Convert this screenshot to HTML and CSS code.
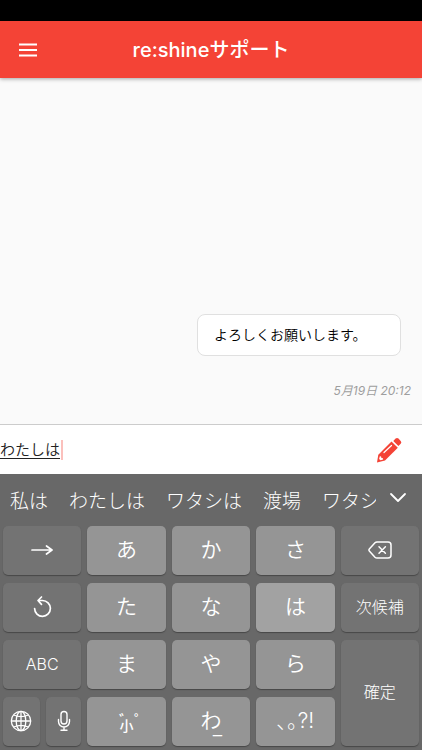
FILE: index.html
```html
<!DOCTYPE html>
<html lang="ja">
<head>
<meta charset="utf-8">
<meta name="viewport" content="width=device-width, initial-scale=1">
<title>re:shineサポート</title>
<link rel="stylesheet" href="styles.css">
</head>
<body>
<div class="app">
  <div class="status-bar"></div>
  <header class="app-bar">
    <button class="icon-button" type="button" aria-label="メニュー">
      <svg width="20" height="14" viewBox="0 0 20 14"><path d="M1 1.500h18M1 7h18M1 12.500h18" stroke="#fff" stroke-width="1.800" fill="none"/></svg>
    </button>
    <h1 class="title">re:shineサポート</h1>
  </header>
  <main class="chat">
    <p class="bubble">よろしくお願いします。</p>
    <time class="time">5月19日 20:12</time>
  </main>
  <form class="composer">
    <input class="composer-input" type="text" value="わたしは" aria-label="メッセージ">
    <span class="caret"></span>
    <button class="icon-button send" type="button" aria-label="送信">
      <svg width="26" height="26" viewBox="0 0 26 26">
        <path fill="#f44336" d="M17.300 3.900 19.600 1.600Q21 .2 22.500 1.600L24.700 3.900Q26 5.300 24.700 6.700L22.400 9Z"/>
        <path fill="#f44336" d="M15.500 4.500 21.800 10.800 9 23.600 1 25.500 2.300 17.700Z"/>
        <path d="M8 15.500 15.500 8.500" stroke="#fff" stroke-width="1.200" stroke-linecap="round"/>
        <path fill="#fff" d="M3.800 19.300 5.100 19.400 5.400 21.100 7 21.300 7.100 22.500 4.500 23.200 3.100 22Z"/>
      </svg>
    </button>
  </form>
  <section class="keyboard" aria-label="キーボード">
    <div class="candidates">
      <div class="candidate-list">
        <button type="button">私は</button>
        <button type="button">わたしは</button>
        <button type="button">ワタシは</button>
        <button type="button">渡場</button>
        <button type="button">ワタシ</button>
      </div>
      <button class="expand" type="button" aria-label="候補を開く">
        <svg width="18" height="12" viewBox="0 0 18 12"><path d="M2 2l7 7 7-7" fill="none" stroke="#fff" stroke-width="1.800" stroke-linecap="round" stroke-linejoin="round"/></svg>
      </button>
    </div>
    <div class="keys">
      <button class="key dark" type="button" aria-label="次の文字">
        <svg width="22" height="12" viewBox="0 0 22 12"><path d="M1 6h20M15.500 2 21 6l-5.500 4" fill="none" stroke="#fff" stroke-width="1.700" stroke-linecap="round" stroke-linejoin="round"/></svg>
      </button>
      <button class="key" type="button">あ</button>
      <button class="key" type="button">か</button>
      <button class="key" type="button">さ</button>
      <button class="key dark" type="button" aria-label="削除">
        <svg width="26" height="20" viewBox="0 0 26 20"><g fill="none" stroke="#fff" stroke-width="1.500" stroke-linecap="round" stroke-linejoin="round"><path d="M10 2h11q3 0 3 3v10q0 3-3 3H10q-1.200 0-2-.8L2.300 11q-.9-1 0-2L8 2.800Q8.800 2 10 2Z"/><path d="M12 6.800l6.400 6.400M18.400 6.800 12 13.200"/></g></svg>
      </button>

      <button class="key dark" type="button" aria-label="戻す">
        <svg width="20" height="24" viewBox="0 0 20 24"><path d="M2.600 13.500a7.900 7.900 0 1 0 7.900-8H6.200M9.500 2 6 5.500 9.500 9.400" fill="none" stroke="#fff" stroke-width="1.700" stroke-linecap="round" stroke-linejoin="round"/></svg>
      </button>
      <button class="key" type="button">た</button>
      <button class="key" type="button">な</button>
      <button class="key active" type="button">は</button>
      <button class="key dark label" type="button">次候補</button>

      <button class="key dark label" type="button">ABC</button>
      <button class="key" type="button">ま</button>
      <button class="key" type="button">や</button>
      <button class="key" type="button">ら</button>
      <button class="key dark label confirm" type="button">確定</button>

      <div class="split">
        <button class="key dark" type="button" aria-label="言語切替">
          <svg width="22" height="22" viewBox="0 0 22 22"><g fill="none" stroke="#fff" stroke-width="1.300"><circle cx="11" cy="11" r="9.700"/><ellipse cx="11" cy="11" rx="4.800" ry="9.700"/><path d="M11 1.300v19.400M1.300 11h19.400M3.700 5q7.300 3.400 14.600 0M3.700 17q7.300-3.400 14.600 0"/></g></svg>
        </button>
        <button class="key dark" type="button" aria-label="音声入力">
          <svg width="14" height="22" viewBox="0 0 14 22"><g fill="none" stroke="#fff" stroke-width="1.400" stroke-linecap="round"><rect x="4" y="1.500" width="6" height="12.500" rx="3"/><path d="M1.500 9.500v2a5.500 5.500 0 0 0 11 0v-2M7 17v3.300M4 20.300h6"/></g></svg>
        </button>
      </div>
      <button class="key marks" type="button"><span class="voicing">゛゜</span><span class="small">小</span></button>
      <button class="key wa" type="button">わ<span class="low-line">_</span></button>
      <button class="key punctuation" type="button">､｡?!</button>
    </div>
  </section>
</div>
</body>
</html>
```
FILE: styles.css
```css
* {
  box-sizing: border-box;
}

body {
  margin: 0;
  background: #fafafa;
  font-family: Inter, "Noto Sans CJK JP", sans-serif;
}

button,
input {
  margin: 0;
  padding: 0;
  border: 0;
  background: none;
  color: inherit;
  font: inherit;
}

svg {
  display: block;
}

.app {
  display: flex;
  flex-direction: column;
  min-height: 100vh;
}

.status-bar {
  height: 21px;
  background: #000;
}

.app-bar {
  display: grid;
  grid-template-columns: 56px 1fr 56px;
  align-items: center;
  height: 57px;
  background: #f44336;
  color: #fff;
  box-shadow: 0 1px 4px rgba(0, 0, 0, 0.35);
}

.icon-button {
  display: flex;
  align-items: center;
  justify-content: center;
  height: 100%;
}

.title {
  margin: 0;
  font-size: 20px;
  font-weight: 500;
  line-height: 28px;
  text-align: center;
}

.chat {
  flex: 1;
  display: flex;
  flex-direction: column;
  justify-content: flex-end;
  align-items: flex-end;
  gap: 25px;
  padding: 0 11px 23px;
}

.bubble {
  width: 51%;
  margin: 0 10px 0 0;
  padding: 9px 16px;
  border: 1px solid #e0e0e0;
  border-radius: 8px;
  background: #fff;
  color: #000;
  font-size: 14px;
  font-weight: 350;
  line-height: 22px;
}

.time {
  color: #9e9e9e;
  font-size: 12px;
  font-style: italic;
  line-height: 20px;
}

.composer {
  display: flex;
  align-items: center;
  height: 50px;
  border-top: 1px solid #ccc;
  background: #fff;
  color: #222;
}

.composer-input {
  width: 61px;
  height: 24px;
  margin-bottom: 2px;
  font-size: 15px;
  font-weight: 350;
  text-decoration: underline 1px;
  text-underline-offset: 3px;
  outline: 0;
}

.caret {
  flex: none;
  width: 2px;
  height: 20px;
  background: #fbc0bc;
}

.send {
  width: 66px;
  margin-left: auto;
}

.keyboard {
  background: #686868;
  color: #fff;
  padding: 0 3px 4px;
}

.candidates {
  display: flex;
  align-items: center;
  height: 52px;
  padding: 3px 0 0 7px;
}

.candidate-list {
  flex: 1;
  display: flex;
  gap: 21px;
  min-width: 0;
  overflow: hidden;
  font-size: 19px;
  font-weight: 300;
  line-height: 28px;
  white-space: nowrap;
}

.candidate-list button {
  flex: none;
}

.expand {
  display: flex;
  justify-content: center;
  width: 43px;
  padding-bottom: 8px;
}

.keys {
  display: grid;
  grid-template-columns: repeat(5, 1fr);
  grid-auto-rows: 49px;
  gap: 8px 6px;
}

.key {
  display: flex;
  align-items: center;
  justify-content: center;
  min-width: 0;
  padding-bottom: 2px;
  border-radius: 5px;
  background: #959595;
  box-shadow: 0 1px 1px #484848;
  font-size: 21px;
  font-weight: 350;
  line-height: 28px;
}

.dark {
  background: #737373;
}

.active {
  background: #a2a2a2;
}

.label {
  font-size: 16px;
  font-weight: 300;
}

.confirm {
  grid-row: span 2;
}

.split {
  display: grid;
  grid-template-columns: 37fr 36fr;
  gap: 6px;
}

.marks {
  display: grid;
  place-items: center;
  place-content: center;
}

.voicing,
.small {
  grid-area: 1 / 1;
  font-weight: 500;
  line-height: 20px;
}

.voicing {
  padding-left: 15px;
  font-size: 15px;
}

.small {
  padding-top: 11px;
  font-size: 14px;
}

.wa {
  position: relative;
}

.low-line {
  position: absolute;
  bottom: 6px;
  left: 41px;
  font-weight: 300;
  line-height: 24px;
}

.punctuation {
  font-weight: 300;
}
```
